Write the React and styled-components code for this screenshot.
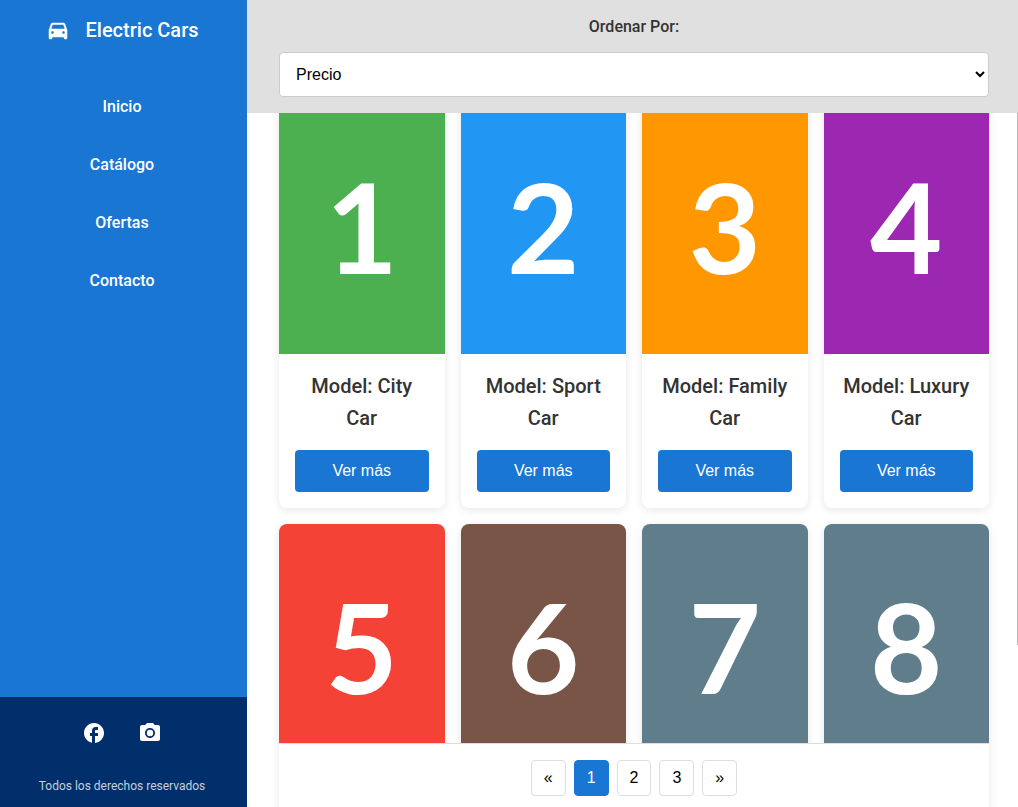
import React, { useLayoutEffect, useRef, useState } from "react";
import styled, { createGlobalStyle } from "styled-components";
import { MdDirectionsCar, MdFacebook, MdPhotoCamera } from "react-icons/md";

const GlobalStyle = createGlobalStyle`
  *, *::before, *::after { box-sizing: border-box; }
  body {
    margin: 0;
    color: #333;
    background: #fff;
    font-family: Roboto, sans-serif;
    font-size: 16px;
  }
`;

const Layout = styled.div`
  display: grid;
  grid-template-columns: 247px minmax(0, 1fr);
  height: 100vh;
`;

const Sidebar = styled.aside`
  display: flex;
  flex-direction: column;
  background: #1976d2;
  color: #fff;
`;

const Brand = styled.h1`
  display: flex;
  align-items: center;
  justify-content: center;
  gap: 16px;
  margin: 0;
  padding: 14px 3px 14px 0;
  font-size: 20px;
  font-weight: 500;
  line-height: 32px;

  svg path:not([fill="none"]) {
    stroke: currentColor;
    stroke-width: 0.5px;
  }
`;

const Nav = styled.nav`
  flex: 1;
  padding: 18px 3px 0 0;
`;

const NavList = styled.ul`
  list-style: none;
  margin: 0;
  padding: 0;
`;

const NavLink = styled.a`
  display: block;
  padding: 16px;
  color: inherit;
  font-weight: 500;
  line-height: 26px;
  text-align: center;
  text-decoration: none;
`;

const SidebarFooter = styled.footer`
  padding: 24px 3px 12px 0;
  background: #002f6c;
  text-align: center;
`;

const Social = styled.div`
  display: flex;
  justify-content: center;
  gap: 32px;
`;

const SocialLink = styled.a`
  display: flex;
  color: #fff;
`;

const Rights = styled.p`
  margin: 32px 0 0;
  color: #c6d0de;
  font-size: 12px;
  line-height: 18px;
`;

const Main = styled.main`
  position: relative;
  display: flex;
  flex-direction: column;
  min-height: 0;
`;

const SortBar = styled.header`
  display: flex;
  flex-direction: column;
  gap: 14px;
  padding: 16px 29px 16px 32px;
  background: #e0e0e0;
`;

const SortLabel = styled.label`
  font-weight: 500;
  line-height: 22px;
  text-align: center;
`;

const SortSelect = styled.select`
  width: 100%;
  height: 45px;
  padding: 12px;
  border: 1px solid #ccc;
  border-radius: 4px;
  background: #fff;
  color: #000;
  font-family: "Liberation Sans", sans-serif;
  font-size: 16px;
`;

const Catalog = styled.div`
  position: relative;
  flex: 1;
  min-height: 0;
  overflow-y: auto;
  scrollbar-width: none;
  padding: 16px 29px 0 32px;
`;

const ScrollMark = styled.div`
  position: absolute;
  top: 113px;
  right: 0;
  width: 1px;
  height: 532px;
  background: #b8b8b8;
`;

const Grid = styled.div`
  display: grid;
  grid-template-columns: repeat(4, minmax(0, 1fr));
  gap: 16px;
  padding-bottom: 16px;
`;

const Card = styled.article`
  overflow: hidden;
  border-radius: 8px;
  background: #fff;
  box-shadow: 0 2px 8px rgba(0, 0, 0, 0.1);
`;

const Cover = styled.div`
  display: flex;
  align-items: center;
  justify-content: center;
  height: 250px;
  padding-bottom: 6px;
  background: ${(p) => p.$color};
  color: #fff;
  font-family: Lato, sans-serif;
  font-size: 125px;
  font-weight: 700;
  line-height: 150px;
`;

const CardBody = styled.div`
  display: flex;
  flex-direction: column;
  gap: 16px;
  padding: 16px;
`;

const CardTitle = styled.h2`
  margin: 0;
  font-size: 20px;
  font-weight: 500;
  line-height: 32px;
  text-align: center;
`;

const MoreButton = styled.button`
  height: 42px;
  padding: 0;
  border: 0;
  border-radius: 4px;
  background: #1976d2;
  color: #fff;
  font-family: "Liberation Sans", sans-serif;
  font-size: 16px;
`;

const Pagination = styled.nav`
  position: sticky;
  bottom: 0;
  display: flex;
  justify-content: center;
  gap: 8px;
  padding: 16px 0 11px;
  border-top: 1px solid #ddd;
  background: #fff;
`;

const PageButton = styled.button`
  height: 36px;
  padding: 0 12px;
  border: 1px solid ${(p) => (p.$active ? "#1976d2" : "#ddd")};
  border-radius: 4px;
  background: ${(p) => (p.$active ? "#1976d2" : "#fff")};
  color: ${(p) => (p.$active ? "#fff" : "#000")};
  font-family: "Liberation Sans", sans-serif;
  font-size: 16px;
`;

const links = ["Inicio", "Catálogo", "Ofertas", "Contacto"];

const cars = [
  { name: "City Car", color: "#4caf50" },
  { name: "Sport Car", color: "#2196f3" },
  { name: "Family Car", color: "#ff9800" },
  { name: "Luxury Car", color: "#9c27b0" },
  { name: "Compact Car", color: "#f44336" },
  { name: "Classic Car", color: "#795548" },
  { name: "Hybrid Car", color: "#607d8b" },
  { name: "Urban Car", color: "#607d8b" },
];

const pages = ["«", "1", "2", "3", "»"];

export default function App() {
  const catalog = useRef(null);
  const [page, setPage] = useState("1");

  useLayoutEffect(() => {
    catalog.current.scrollTop = 25;
  }, []);

  return (
    <>
      <GlobalStyle />
      <Layout>
        <Sidebar>
          <Brand>
            <MdDirectionsCar size={24} />
            Electric Cars
          </Brand>
          <Nav>
            <NavList>
              {links.map((link) => (
                <li key={link}>
                  <NavLink href="#">{link}</NavLink>
                </li>
              ))}
            </NavList>
          </Nav>
          <SidebarFooter>
            <Social>
              <SocialLink href="#" aria-label="Facebook">
                <MdFacebook size={24} />
              </SocialLink>
              <SocialLink href="#" aria-label="Instagram">
                <MdPhotoCamera size={24} />
              </SocialLink>
            </Social>
            <Rights>Todos los derechos reservados</Rights>
          </SidebarFooter>
        </Sidebar>
        <Main>
          <SortBar>
            <SortLabel htmlFor="sort">Ordenar Por:</SortLabel>
            <SortSelect id="sort" defaultValue="precio">
              <option value="precio">Precio</option>
            </SortSelect>
          </SortBar>
          <Catalog ref={catalog}>
            <Grid>
              {cars.map((car, i) => (
                <Card key={car.name}>
                  <Cover $color={car.color}>{i + 1}</Cover>
                  <CardBody>
                    <CardTitle>Model: {car.name}</CardTitle>
                    <MoreButton type="button">Ver más</MoreButton>
                  </CardBody>
                </Card>
              ))}
            </Grid>
            <Pagination aria-label="Páginas">
              {pages.map((label) => (
                <PageButton
                  key={label}
                  type="button"
                  $active={label === page}
                  onClick={() => /\d/.test(label) && setPage(label)}
                >
                  {label}
                </PageButton>
              ))}
            </Pagination>
          </Catalog>
          <ScrollMark />
        </Main>
      </Layout>
    </>
  );
}
